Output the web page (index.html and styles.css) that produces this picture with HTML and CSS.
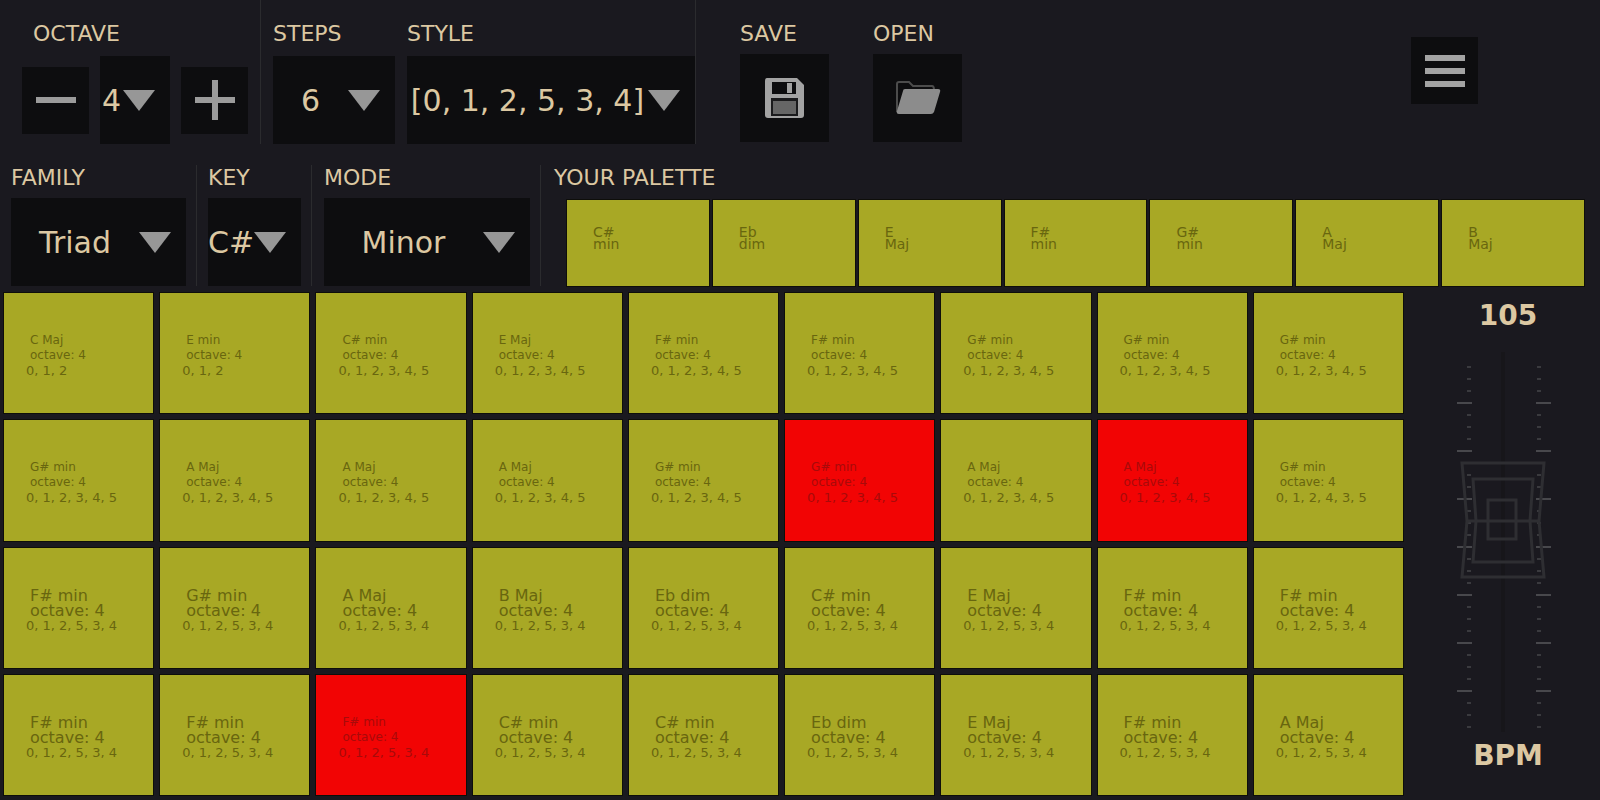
FILE: index.html
```html
<!DOCTYPE html>
<html lang="en">
<head>
  <meta charset="UTF-8" />
  <meta name="viewport" content="width=device-width, initial-scale=1.0"/>
  <title>Chord Pads</title>
  <link rel="stylesheet" href="styles.css">
</head>
<body>
  <header class="toolbar">
    <div class="group group-octave">
      <label class="label" for="octave">OCTAVE</label>
      <div class="controls">
        <button class="icon-btn" aria-label="Octave down">
          <svg width="40" height="40" viewBox="0 0 40 40"><path d="M0 20h40" stroke="#9b9b9b" stroke-width="6"/></svg>
        </button>
        <div class="select select-octave">
          <select id="octave"><option>4</option></select>
        </div>
        <button class="icon-btn" aria-label="Octave up">
          <svg width="40" height="40" viewBox="0 0 40 40"><path d="M0 20h40M20 0v40" stroke="#9b9b9b" stroke-width="6"/></svg>
        </button>
      </div>
    </div>

    <div class="group group-pattern">
      <div class="field">
        <label class="label" for="steps">STEPS</label>
        <div class="select select-steps">
          <select id="steps"><option>6</option></select>
        </div>
      </div>
      <div class="field">
        <label class="label" for="style">STYLE</label>
        <div class="select select-style">
          <select id="style"><option>[0, 1, 2, 5, 3, 4]</option></select>
        </div>
      </div>
    </div>

    <div class="files">
      <div class="field">
        <label class="label" for="save">SAVE</label>
        <button class="file-btn" id="save">
          <svg width="42" height="42" viewBox="0 0 42 42">
            <path d="M3 1h30l7 7v30q0 3-3 3H4q-3 0-3-3V4q0-3 2-3z" fill="#a3a3a3"/>
            <path d="M8 5h24v12H8z" fill="#0d0d0f"/>
            <path d="M23 6h5v10h-5z" fill="#a3a3a3"/>
            <path d="M7 21h27v18H7z" fill="#1b1b1d"/>
            <path d="M9 24h23v13H9z" fill="#666"/>
          </svg>
        </button>
      </div>
      <div class="field">
        <label class="label" for="open">OPEN</label>
        <button class="file-btn" id="open">
          <svg width="46" height="36" viewBox="0 0 46 36">
            <path d="M2 32V4q0-2 2-2h10l4 4h19q2 0 2 4" fill="none" stroke="#4c4c4c" stroke-width="2"/>
            <path d="M10 9h33q3 0 2 3l-6 20q-1 2-3 2H4q-3 0-2-3l6-20q0-2 2-2z" fill="#8c8c8c"/>
          </svg>
        </button>
      </div>
    </div>

    <button class="icon-btn menu-btn" aria-label="Menu">
      <svg width="40" height="34" viewBox="0 0 40 34"><path d="M0 4h40M0 17h40M0 30h40" stroke="#a3a3a3" stroke-width="6"/></svg>
    </button>
  </header>

  <section class="chords">
    <div class="group group-family">
      <label class="label" for="family">FAMILY</label>
      <div class="select select-family">
        <select id="family"><option>Triad</option></select>
      </div>
    </div>
    <div class="group group-key">
      <label class="label" for="key">KEY</label>
      <div class="select select-key">
        <select id="key"><option>C#</option></select>
      </div>
    </div>
    <div class="group group-mode">
      <label class="label" for="mode">MODE</label>
      <div class="select select-mode">
        <select id="mode"><option>Minor</option></select>
      </div>
    </div>
    <div class="palette">
      <h2 class="label">YOUR PALETTE</h2>
      <div class="palette-pads" id="palette"></div>
    </div>
  </section>

  <main class="stage">
    <div class="grid" id="grid"></div>
    <div class="tempo">
      <output class="tempo-text" for="bpm" id="bpm-value">105</output>
      <div class="fader">
        <svg width="100" height="390" viewBox="0 0 100 390">
          <path d="M49 2v380" stroke="#17161a" stroke-width="4"/>
          <g id="ticks" stroke="#48484c" stroke-width="2"></g>
          <g fill="none" stroke="#2e2e32" stroke-width="3">
            <path d="M8 113h82l-5 58 5 56H8l5-56z"/>
            <path d="M19 129h60l-3 42 3 41H19l3-41z"/>
            <path d="M34 150h28v39H34z"/>
            <path d="M13 171h72"/>
          </g>
        </svg>
        <input type="range" id="bpm" min="30" max="180" value="105">
      </div>
      <label class="tempo-text" for="bpm">BPM</label>
    </div>
  </main>

  <script>
    const palette = ['C# min', 'Eb dim', 'E Maj', 'F# min', 'G# min', 'A Maj', 'B Maj'];

    const up = '0, 1, 2, 3, 4, 5';
    const mix = '0, 1, 2, 5, 3, 4';
    const pads = [
      ['C Maj', '0, 1, 2'], ['E min', '0, 1, 2'], ['C# min', up], ['E Maj', up], ['F# min', up],
      ['F# min', up], ['G# min', up], ['G# min', up], ['G# min', up],

      ['G# min', up], ['A Maj', up], ['A Maj', up], ['A Maj', up], ['G# min', up],
      ['G# min', up, 'playing'], ['A Maj', up], ['A Maj', up, 'playing'], ['G# min', '0, 1, 2, 4, 3, 5'],

      ['F# min', mix, 'large'], ['G# min', mix, 'large'], ['A Maj', mix, 'large'], ['B Maj', mix, 'large'], ['Eb dim', mix, 'large'],
      ['C# min', mix, 'large'], ['E Maj', mix, 'large'], ['F# min', mix, 'large'], ['F# min', mix, 'large'],

      ['F# min', mix, 'large'], ['F# min', mix, 'large'], ['F# min', mix, 'playing'], ['C# min', mix, 'large'], ['C# min', mix, 'large'],
      ['Eb dim', mix, 'large'], ['E Maj', mix, 'large'], ['F# min', mix, 'large'], ['A Maj', mix, 'large']
    ];

    document.getElementById('palette').innerHTML = palette.map(name => {
      const [root, type] = name.split(' ');
      return `<button class="chord"><span>${root}</span><span>${type}</span></button>`;
    }).join('');

    document.getElementById('grid').innerHTML = pads.map(([name, seq, state]) =>
      `<button class="pad ${state || ''}">
        <span class="pad-name">${name}</span>
        <span class="pad-name">octave: 4</span>
        <span class="pad-seq">${seq}</span>
      </button>`
    ).join('');

    // every fourth mark on the fader is a long one
    let ticks = '';
    for (let i = 0; i < 31; i++) {
      const y = 17 + i * 12;
      ticks += i % 4 === 3
        ? `<path d="M3 ${y}h15M82 ${y}h15"/>`
        : `<path d="M13 ${y}h4M83 ${y}h4" opacity="0.7"/>`;
    }
    document.getElementById('ticks').innerHTML = ticks;

    const bpm = document.getElementById('bpm');
    bpm.addEventListener('input', () => {
      document.getElementById('bpm-value').innerText = bpm.value;
    });
  </script>
</body>
</html>
```

FILE: styles.css
```css
* {
  box-sizing: border-box;
}
body {
  font-family: 'DejaVu Sans', sans-serif;
  background: #1a191f;
  color: #dcc8a2;
  margin: 0;
  min-height: 100vh;
  display: flex;
  flex-direction: column;
}
button, select {
  font-family: inherit;
  border: none;
  border-radius: 0;
  padding: 0;
  background: #0d0d0f;
  cursor: pointer;
}
.label {
  display: block;
  margin: 0;
  font-size: 22px;
  font-weight: normal;
  line-height: 24px;
}

/* top bar */
.toolbar {
  display: flex;
  align-items: flex-start;
}
.toolbar .group, .files {
  padding-top: 22px;
}
.group {
  border-right: 1px solid #2b2b2e;
}
.group-octave {
  padding-left: 22px;
  padding-right: 12px;
}
.group-octave .label {
  padding-left: 11px;
  margin-bottom: 10px;
}
.controls {
  display: flex;
  align-items: center;
  gap: 11px;
}
.group-pattern {
  display: flex;
  gap: 12px;
  padding-left: 12px;
}
.group-pattern .label {
  margin-bottom: 10px;
}
.icon-btn {
  width: 67px;
  height: 67px;
  display: flex;
  align-items: center;
  justify-content: center;
}
.files {
  display: flex;
  gap: 44px;
  margin-left: 44px;
}
.files .label {
  margin-bottom: 8px;
}
.file-btn {
  width: 89px;
  height: 88px;
  display: flex;
  align-items: center;
  justify-content: center;
}
.menu-btn {
  margin: 37px 122px 0 auto;
}

/* drop-downs */
.select {
  position: relative;
  height: 88px;
}
.select select {
  appearance: none;
  width: 100%;
  height: 100%;
  padding-right: 47px;
  font-size: 30px;
  color: inherit;
  text-align: center;
  text-align-last: center;
}
.select::after {
  content: '';
  position: absolute;
  right: 15px;
  top: 34px;
  width: 32px;
  height: 21px;
  background: #979797;
  clip-path: polygon(0 0, 100% 0, 50% 100%);
  pointer-events: none;
}
.select-octave { width: 70px; }
.select-steps { width: 122px; }
.select-style { width: 288px; }
.select-family { width: 175px; }
.select-key { width: 93px; }
.select-mode { width: 206px; }

/* chord choice and palette */
.chords {
  display: flex;
  margin-top: 21px;
}
.chords .label {
  margin-bottom: 8px;
}
.group-family, .group-key, .group-mode {
  padding: 1px 10px 0 11px;
}
.group-mode {
  padding-left: 12px;
}
.palette {
  flex: 1;
  padding: 1px 16px 0 13px;
}
.palette-pads {
  display: grid;
  grid-template-columns: repeat(7, 1fr);
  gap: 4px;
  margin-top: 10px;
  padding-left: 13px;
}
.chord, .pad {
  display: flex;
  flex-direction: column;
  align-items: flex-start;
  justify-content: flex-start;
  background: #a8a825;
  color: #68660f;
  box-shadow: 0 0 0 1px #0e0e0a;
  text-align: left;
}
.chord {
  height: 86px;
  padding: 26px 0 0 26px;
  font-size: 14px;
  line-height: 12px;
}

/* pads */
.stage {
  flex: 1;
  display: flex;
  padding: 7px 0 5px 4px;
}
.grid {
  flex: 1;
  display: grid;
  grid-template-columns: repeat(9, 1fr);
  grid-auto-rows: 1fr;
  gap: 7px;
}
.pad {
  padding: 40px 0 0 22px;
  font-size: 12px;
  line-height: 15px;
}
.pad-name {
  padding-left: 4px;
}
.pad-seq {
  font-size: 13px;
}
.pad.large .pad-name {
  font-size: 16px;
}
.pad.playing {
  background: #f20404;
  color: #a80a0a;
}

/* tempo fader */
.tempo {
  width: 197px;
  padding: 7px 0 0 13px;
  display: flex;
  flex-direction: column;
  align-items: center;
}
.tempo-text {
  font-size: 28px;
  font-weight: bold;
  line-height: 32px;
}
.fader {
  position: relative;
  height: 390px;
  margin: 18px 8px 0 0;
}
.fader input {
  position: absolute;
  inset: 0;
  width: 100%;
  height: 100%;
  margin: 0;
  opacity: 0;
  writing-mode: vertical-lr;
  direction: rtl;
}
```
